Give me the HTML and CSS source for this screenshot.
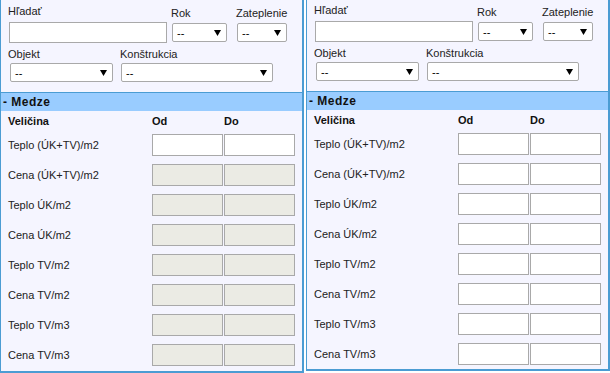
FILE: index.html
```html
<!DOCTYPE html>
<html lang="sk">
<head>
<meta charset="utf-8">
<title>Filter</title>
<link rel="stylesheet" href="styles.css">
</head>
<body>
<div class="screen">
  <section class="panel">
    <div class="filters">
      <div class="frow">
        <div class="field f-search"><label class="lbl">Hľadať</label><input class="txt" type="text"></div>
        <div class="field f-rok"><label class="lbl">Rok</label><div class="sel w-rok"><span>--</span><svg class="arr" width="7" height="6" viewBox="0 0 7 6"><polygon points="0,0 7,0 3.5,6"/></svg></div></div>
        <div class="field f-zat"><label class="lbl">Zateplenie</label><div class="sel w-zat"><span>--</span><svg class="arr" width="7" height="6" viewBox="0 0 7 6"><polygon points="0,0 7,0 3.5,6"/></svg></div></div>
      </div>
      <div class="frow frow2">
        <div class="field f-obj"><label class="lbl">Objekt</label><div class="sel w-obj"><span>--</span><svg class="arr" width="7" height="6" viewBox="0 0 7 6"><polygon points="0,0 7,0 3.5,6"/></svg></div></div>
        <div class="field f-kon"><label class="lbl">Konštrukcia</label><div class="sel w-kon"><span>--</span><svg class="arr" width="7" height="6" viewBox="0 0 7 6"><polygon points="0,0 7,0 3.5,6"/></svg></div></div>
      </div>
    </div>
    <div class="medze-head">- Medze</div>
    <div class="ghead"><span class="c-name">Veličina</span><span class="c-od">Od</span><span class="c-do">Do</span></div>
    <div class="row"><span class="c-name">Teplo (ÚK+TV)/m2</span><input class="num" type="text"><input class="num" type="text"></div>
    <div class="row"><span class="c-name">Cena (ÚK+TV)/m2</span><input class="num" type="text" disabled><input class="num" type="text" disabled></div>
    <div class="row"><span class="c-name">Teplo ÚK/m2</span><input class="num" type="text" disabled><input class="num" type="text" disabled></div>
    <div class="row"><span class="c-name">Cena ÚK/m2</span><input class="num" type="text" disabled><input class="num" type="text" disabled></div>
    <div class="row"><span class="c-name">Teplo TV/m2</span><input class="num" type="text" disabled><input class="num" type="text" disabled></div>
    <div class="row"><span class="c-name">Cena TV/m2</span><input class="num" type="text" disabled><input class="num" type="text" disabled></div>
    <div class="row"><span class="c-name">Teplo TV/m3</span><input class="num" type="text" disabled><input class="num" type="text" disabled></div>
    <div class="row"><span class="c-name">Cena TV/m3</span><input class="num" type="text" disabled><input class="num" type="text" disabled></div>
  </section>

  <section class="panel panel-b">
    <div class="filters">
      <div class="frow">
        <div class="field f-search"><label class="lbl">Hľadať</label><input class="txt" type="text"></div>
        <div class="field f-rok"><label class="lbl">Rok</label><div class="sel w-rok"><span>--</span><svg class="arr" width="7" height="6" viewBox="0 0 7 6"><polygon points="0,0 7,0 3.5,6"/></svg></div></div>
        <div class="field f-zat"><label class="lbl">Zateplenie</label><div class="sel w-zat"><span>--</span><svg class="arr" width="7" height="6" viewBox="0 0 7 6"><polygon points="0,0 7,0 3.5,6"/></svg></div></div>
      </div>
      <div class="frow frow2">
        <div class="field f-obj"><label class="lbl">Objekt</label><div class="sel w-obj"><span>--</span><svg class="arr" width="7" height="6" viewBox="0 0 7 6"><polygon points="0,0 7,0 3.5,6"/></svg></div></div>
        <div class="field f-kon"><label class="lbl">Konštrukcia</label><div class="sel w-kon"><span>--</span><svg class="arr" width="7" height="6" viewBox="0 0 7 6"><polygon points="0,0 7,0 3.5,6"/></svg></div></div>
      </div>
    </div>
    <div class="medze-head">- Medze</div>
    <div class="ghead"><span class="c-name">Veličina</span><span class="c-od">Od</span><span class="c-do">Do</span></div>
    <div class="row"><span class="c-name">Teplo (ÚK+TV)/m2</span><input class="num" type="text"><input class="num" type="text"></div>
    <div class="row"><span class="c-name">Cena (ÚK+TV)/m2</span><input class="num" type="text"><input class="num" type="text"></div>
    <div class="row"><span class="c-name">Teplo ÚK/m2</span><input class="num" type="text"><input class="num" type="text"></div>
    <div class="row"><span class="c-name">Cena ÚK/m2</span><input class="num" type="text"><input class="num" type="text"></div>
    <div class="row"><span class="c-name">Teplo TV/m2</span><input class="num" type="text"><input class="num" type="text"></div>
    <div class="row"><span class="c-name">Cena TV/m2</span><input class="num" type="text"><input class="num" type="text"></div>
    <div class="row"><span class="c-name">Teplo TV/m3</span><input class="num" type="text"><input class="num" type="text"></div>
    <div class="row"><span class="c-name">Cena TV/m3</span><input class="num" type="text"><input class="num" type="text"></div>
  </section>
</div>
</body>
</html>
```

FILE: styles.css
```css
html, body {
  margin: 0;
  padding: 0;
  background: #ffffff;
}

body {
  font-family: "Liberation Sans", Arial, sans-serif;
  font-size: 11px;
  color: #222222;
  overflow: hidden;
}

.screen {
  display: flex;
  align-items: flex-start;
  gap: 2px;
}

.panel {
  box-sizing: border-box;
  width: 304px;
  background: #f5f5ff;
  border-left: 1px solid #4b9cd3;
  border-right: 2px solid #4b9cd3;
  border-bottom: 2px solid #4b9cd3;
  padding-bottom: 1px;
}

.panel-b {
  margin-top: -1px;
  padding-bottom: 0;
}

.filters {
  padding: 5px 0 10px 7px;
}

.frow {
  display: flex;
  align-items: flex-start;
}

.frow2 {
  margin-top: 5px;
}

.lbl {
  display: block;
  line-height: 13px;
  color: #222222;
}

.f-search { width: 159px; }
.f-rok { width: 56px; margin-left: 4px; margin-top: 2px; }
.f-zat { width: 51px; margin-left: 9px; margin-top: 2px; }
.f-obj { width: 105px; }
.f-kon { width: 153px; margin-left: 7px; }

.txt {
  display: block;
  box-sizing: border-box;
  width: 158px;
  height: 21px;
  margin: 4px 0 0 1px;
  padding: 0;
  border: 1px solid #a9a9a9;
  background: #ffffff;
  outline: none;
}

.sel {
  box-sizing: border-box;
  height: 19px;
  border: 1px solid #a9a9a9;
  border-radius: 2px;
  background: #ffffff;
  display: flex;
  align-items: center;
  justify-content: space-between;
  padding: 1px 5px 0 4px;
  color: #000000;
  line-height: 13px;
}

.f-rok .sel, .f-zat .sel { margin: 3px 0 0 1px; }
.f-obj .sel { margin: 2px 0 0 2px; }
.f-kon .sel { margin: 2px 0 0 1px; }

.w-rok { width: 55px; }
.w-zat { width: 50px; }
.w-obj { width: 103px; }
.w-kon { width: 152px; }

.arr {
  display: block;
  fill: #000000;
}

.medze-head {
  border-top: 1px solid #4b9cd3;
  background: #99ccff;
  height: 17px;
  padding: 1px 0 0 2px;
  line-height: 17px;
  font-size: 12px;
  font-weight: bold;
  letter-spacing: 0.5px;
  color: #111111;
}

.ghead {
  display: flex;
  margin: 4px 0 2px;
  padding-left: 7px;
  line-height: 13px;
  font-weight: bold;
  color: #111111;
}

.c-name { width: 144px; }
.c-od { width: 72px; }

.row {
  display: flex;
  align-items: center;
  height: 30px;
  padding-left: 7px;
}

.row .c-name {
  line-height: 13px;
}

.num {
  box-sizing: border-box;
  width: 71px;
  height: 22px;
  margin: 0;
  padding: 0;
  border: 1px solid #a9a9a9;
  border-radius: 0;
  background: #ffffff;
  outline: none;
}

.num + .num {
  margin-left: 1px;
}

.num:disabled {
  background: #ebebe4;
}
```
